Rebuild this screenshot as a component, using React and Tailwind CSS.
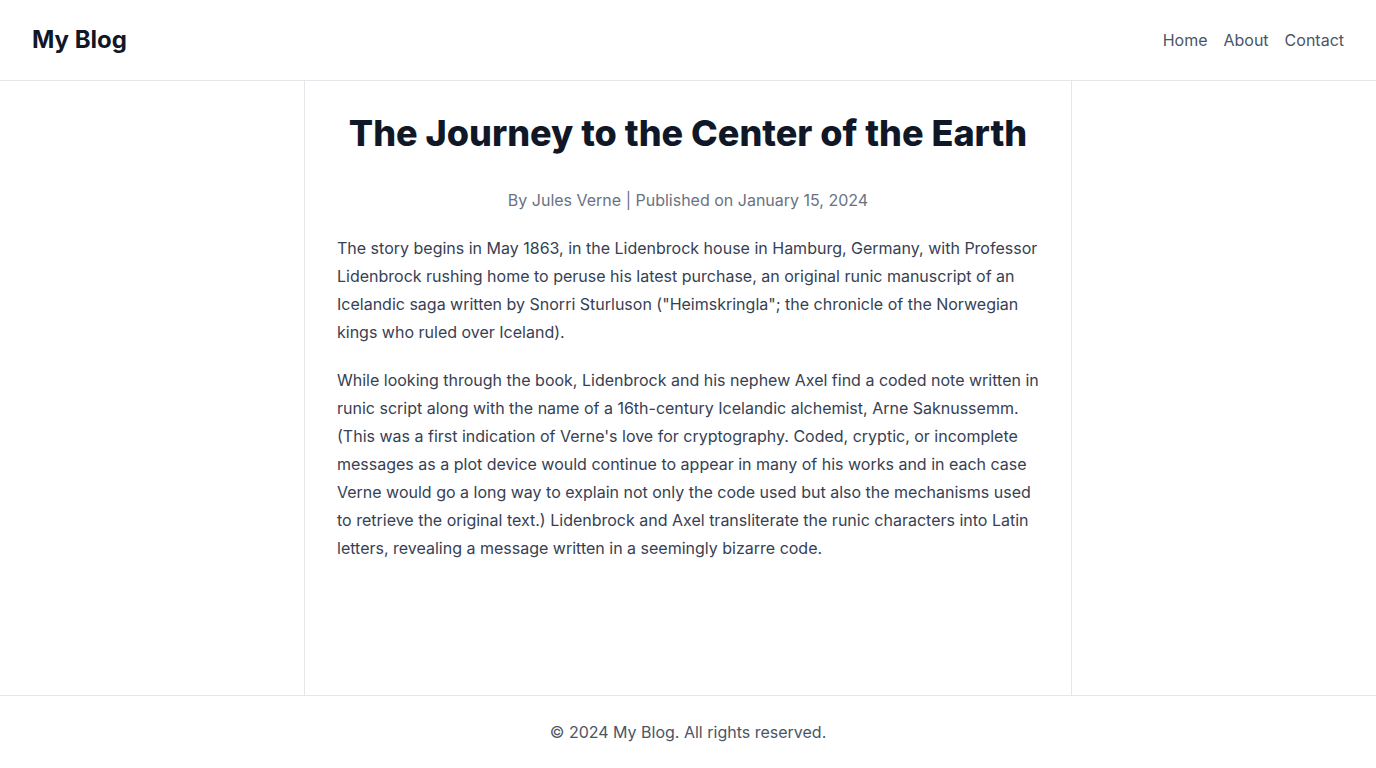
// 블로그 글 상세 페이지
// 헤더 + 본문 + 푸터

const paragraphs = [
    'The story begins in May 1863, in the Lidenbrock house in Hamburg, Germany, with Professor Lidenbrock rushing home to peruse his latest purchase, an original runic manuscript of an Icelandic saga written by Snorri Sturluson ("Heimskringla"; the chronicle of the Norwegian kings who ruled over Iceland).',
    "While looking through the book, Lidenbrock and his nephew Axel find a coded note written in runic script along with the name of a 16th-century Icelandic alchemist, Arne Saknussemm. (This was a first indication of Verne's love for cryptography. Coded, cryptic, or incomplete messages as a plot device would continue to appear in many of his works and in each case Verne would go a long way to explain not only the code used but also the mechanisms used to retrieve the original text.) Lidenbrock and Axel transliterate the runic characters into Latin letters, revealing a message written in a seemingly bizarre code.",
];

function Header() {
    return (
        <header className="h-[81px] flex items-center justify-between px-8 border-b border-gray-200 bg-white">
            <h1 className="text-2xl font-bold text-gray-900">My Blog</h1>
            <nav className="flex gap-4 text-base text-gray-600">
                <a href="#">Home</a>
                <a href="#">About</a>
                <a href="#">Contact</a>
            </nav>
        </header>
    );
}

export default function App() {
    return (
        <div
            className="min-h-screen flex flex-col bg-white"
            style={{ fontFamily: "Inter, 'Noto Sans', sans-serif" }}
        >
            <Header />
            <main className="flex-1 w-full max-w-3xl mx-auto border-x border-gray-200 px-8 pt-8">
                <h2 className="text-4xl font-extrabold text-gray-900 text-center">
                    The Journey to the Center of the Earth
                </h2>
                <p className="mt-[35px] text-base text-gray-500 text-center">
                    By Jules Verne | Published on January 15, 2024
                </p>
                <div className="mt-[22px]">
                    {paragraphs.map((text, i) => (
                        <p key={i} className="text-base leading-7 text-gray-700 mb-5">
                            {text}
                        </p>
                    ))}
                </div>
            </main>
            <footer className="border-t border-gray-200 py-6 text-center text-base text-gray-600">
                © 2024 My Blog. All rights reserved.
            </footer>
        </div>
    );
}
